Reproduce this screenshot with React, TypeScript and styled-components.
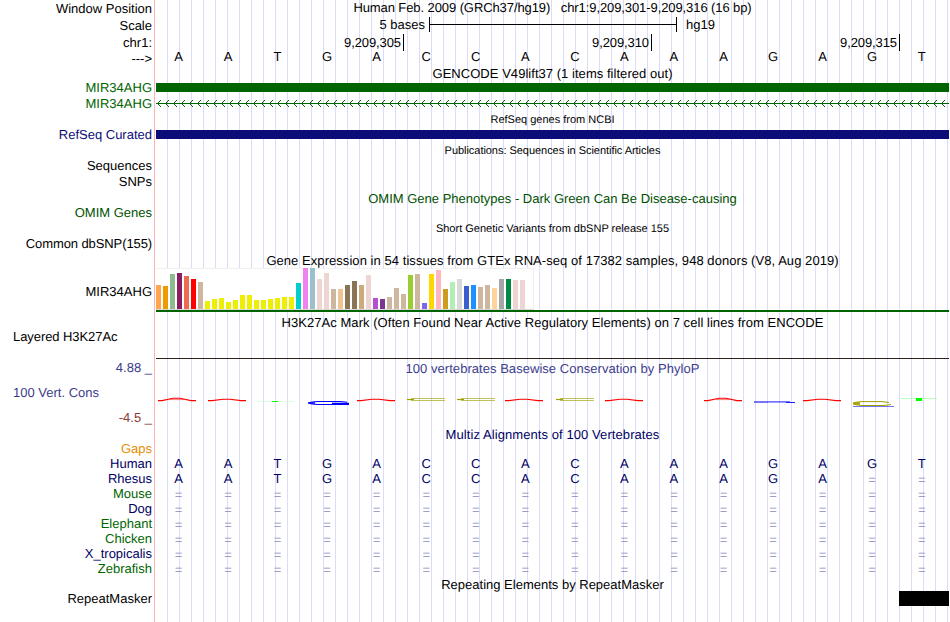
import React from 'react';
import styled, { createGlobalStyle } from 'styled-components';

const GlobalStyle = createGlobalStyle`
    body {
        margin: 0;
        background: #fff;
        overflow: hidden;
    }
`;

const Browser = styled.div`
    width: 949px;
    height: 622px;
    font-family: "Liberation Sans", Arial, sans-serif;
    font-size: 13px;
    text-rendering: geometricPrecision;
    color: #000;
    background:
      linear-gradient(#ffb4b4, #ffb4b4) 154px 0 / 1px 100% no-repeat,
      repeating-linear-gradient(90deg, #dcdcfa 0 1px, transparent 1px 12px) 167px 0 / 782px 100% no-repeat;
`;

const Row = styled.div<{ $h: number }>`
    display: grid;
    grid-template-columns: 152px 793px;
    column-gap: 4px;
    height: ${(p) => p.$h}px;
`;

const Label = styled.div<{ $color?: string; $left?: boolean; $h?: number; $top?: number; $ls?: number }>`
    box-sizing: border-box;
    text-align: ${(p) => (p.$left ? 'left' : 'right')};
    padding-left: ${(p) => (p.$left ? 13 : 0)}px;
    padding-top: ${(p) => p.$top || 0}px;
    line-height: ${(p) => p.$h || 15}px;
    letter-spacing: ${(p) => p.$ls || 0}px;
    color: ${(p) => p.$color || '#000'};
    white-space: nowrap;
`;

const Title = styled.div<{ $color?: string; $small?: boolean; $top?: number; $ls?: number }>`
    grid-column: 2;
    text-align: center;
    padding-top: ${(p) => p.$top || 0}px;
    font-size: ${(p) => (p.$small ? 11 : 13)}px;
    line-height: 15px;
    letter-spacing: ${(p) => p.$ls || 0}px;
    color: ${(p) => p.$color || '#000'};
    white-space: pre;
`;

const Bar = styled.div<{ $color: string }>`
    height: 9px;
    margin-top: 3px;
    background: ${(p) => p.$color};
`;

const ScaleBar = styled.div`
    display: flex;
    line-height: 15px;
    padding-top: 1px;
`;

const ScaleText = styled.div`
    width: 269px;
    margin-right: 4px;
    text-align: right;
`;

const ScaleRule = styled.div`
    box-sizing: border-box;
    width: 248px;
    height: 15px;
    margin-right: 9px;
    border: solid #000;
    border-width: 0 1px;
    background: linear-gradient(#000, #000) 0 7px / 100% 1px no-repeat;
`;

const Ticks = styled.div`
    display: grid;
    grid-template-columns: 248px 248px 248px;
    height: 14px;
    line-height: 17px;
    letter-spacing: -0.1px;
`;

const Tick = styled.div`
    text-align: right;
    padding-right: 2px;
    border-right: 1px solid #000;
`;

const Bases = styled.div<{ $color?: string; $lift?: number }>`
    display: grid;
    grid-template-columns: repeat(16, 49.56px);
    width: 793px;
    margin-left: -2.3px;
    margin-top: ${(p) => -(p.$lift || 0)}px;
    line-height: 15px;
    text-align: center;
    color: ${(p) => p.$color || '#000'};
`;

const Gap = styled.span`
    color: #8c8cc0;
    padding-top: 1px;
`;

const Expression = styled.div`
    height: 42px;
    border-bottom: 2px solid #006400;
`;

const Tissues = styled.div`
    box-sizing: border-box;
    width: 378px;
    height: 42px;
    display: flex;
    align-items: flex-end;
    gap: 2px;
    background: #fff;
    border-bottom: 1px solid #d8d8d8;
    box-shadow: inset -1px 1px #f0f0f0;
`;

const Tissue = styled.div`
    width: 5px;
    flex: none;
`;

const Baseline = styled.div`
    height: 29px;
    border-bottom: 1px solid #321e1e;
`;

const Limits = styled.div`
    display: flex;
    flex-direction: column;
    justify-content: space-between;
    height: 49px;
    line-height: 15px;
`;

const RepeatBox = styled.div`
    width: 50px;
    height: 15px;
    margin-left: auto;
    background: #000;
`;

const Drawing = styled.svg`
    display: block;
`;

const tissues: [number, string][] = [
    [24, '#ffa54f'], [23, '#ee9a00'], [35, '#8fbc8f'], [36, '#8b1c62'], [33, '#ee6a50'], [30, '#ff0000'],
    [27, '#cdb79e'], [8, '#eeee00'], [10, '#eeee00'], [11, '#eeee00'], [7, '#eeee00'], [9, '#eeee00'],
    [14, '#eeee00'], [14, '#eeee00'], [9, '#eeee00'], [9, '#eeee00'], [10, '#eeee00'], [11, '#eeee00'],
    [12, '#eeee00'], [12, '#eeee00'], [26, '#00cdcd'], [41, '#ee82ee'], [41, '#9ac0cd'], [30, '#eed5d2'],
    [36, '#eed5d2'], [20, '#cdb79e'], [20, '#eec591'], [24, '#8b7355'], [28, '#8b7355'], [24, '#cdaa7d'],
    [34, '#eed5d2'], [11, '#b452cd'], [10, '#7a378b'], [12, '#cdb79e'], [21, '#cdb79e'], [15, '#cdb79e'],
    [34, '#9acd32'], [35, '#cdb79e'], [6, '#7a67ee'], [35, '#ffd700'], [39, '#ffb6c1'], [20, '#cd9b1d'],
    [27, '#b4eeb4'], [30, '#d9d9d9'], [23, '#3a5fcd'], [24, '#1e90ff'], [22, '#cdb79e'], [24, '#cdb79e'],
    [21, '#ffd39b'], [30, '#a6a6a6'], [30, '#008b45'], [29, '#eed5d2'], [29, '#eed5d2'],
];

const sequence = 'AATGACCACAAAGAGT';

const species = [
    { name: 'Human', color: '#000064', bases: sequence },
    { name: 'Rhesus', color: '#000064', bases: 'AATGACCACAAAGA==' },
    { name: 'Mouse', color: '#006400', bases: '================' },
    { name: 'Dog', color: '#000064', bases: '================' },
    { name: 'Elephant', color: '#006400', bases: '================' },
    { name: 'Chicken', color: '#006400', bases: '================' },
    { name: 'X_tropicalis', color: '#000064', bases: '================' },
    { name: 'Zebrafish', color: '#006400', bases: '================' },
];

// [left edge, peak height] of each flattened A
const peaks = [[2, 3.3], [52, 2.3], [201, 2.3], [349, 2.3], [449, 2.3], [548, 3.3], [647, 2.3]];

const Intron = () => (
    <Drawing width="793" height="16" shapeRendering="crispEdges">
        <defs>
            <pattern id="arrows" width="8" height="16" patternUnits="userSpaceOnUse">
                <path d="M1 7h1v1h-1z M2 6h1v1h-1z M3 5h1v1h-1z M4 4h1v1h-1z M2 8h1v1h-1z M3 9h1v1h-1z M4 10h1v1h-1z" fill="#006400" />
            </pattern>
        </defs>
        <rect y="7" width="793" height="1" fill="#006400" />
        <rect width="793" height="16" fill="url(#arrows)" />
    </Drawing>
);

const Conservation = () => (
    <Drawing width="793" height="50" viewBox="0 376 793 50">
        {peaks.map(([x, h]) => (
            <g key={x} fill="none" stroke="#ff0000">
                <path
                    d={`M${x} 400.6 H${x + 4} L${x + 15} ${401.5 - h} H${x + 22} L${x + 33} 400.6 H${x + 38}`}
                    strokeWidth="1.1"
                />
                {h > 3 && <path d={`M${x + 12} 399.6H${x + 26}`} strokeWidth="0.5" />}
            </g>
        ))}
        {[251, 301, 400].map((x) => (
            <g key={x} fill="none" stroke="#a0a000">
                <path d={`M${x + 4} 398.5H${x + 38}M${x + 4} 400.5H${x + 38}`} strokeWidth="0.65" />
                <path d={`M${x} 399.5H${x + 7}`} strokeWidth="1.2" />
            </g>
        ))}
        <path d="M101 401.5h37" stroke="#c8ffc8" strokeWidth="0.6" />
        <path d="M116 401.5h6" stroke="#00ff00" />
        <g fill="none" stroke="#0000ff">
            <path d="M191 402.2L184 401.5H162Q153 402 153 403T162 404.5H188" strokeWidth="1" />
            <path d="M152 403H159M176 403.5H193M186 404.2H193" strokeWidth="1.4" />
            <path d="M598 401.5H634M598 402.5H612" strokeWidth="0.55" />
            <path d="M612 402.5H630" strokeWidth="0.4" />
            <path d="M630 402.5H639" strokeWidth="0.9" />
        </g>
        <g fill="none" stroke="#a0a000">
            <path d="M733 402.5L726 401.6H706Q698 402 698 403.5T706 405.5H728L735 404.5" strokeWidth="1" />
            <path d="M697 403.5H704" strokeWidth="2.4" />
        </g>
        <path d="M697 406.5h41" stroke="#5050f0" strokeWidth="0.8" />
        <path d="M745 398.5h36" stroke="#96ff96" strokeWidth="0.7" />
        <rect x="760" y="398" width="6" height="3" fill="#00ff00" />
    </Drawing>
);

const BaseRow = ({ bases, color, lift }: { bases: string; color?: string; lift?: number }) => (
    <Bases $color={color} $lift={lift}>
        {bases.split('').map((b, i) => (b === '=' ? <Gap key={i}>=</Gap> : <span key={i}>{b}</span>))}
    </Bases>
);

const App = () => {
    return (
        <Browser>
            <GlobalStyle />
            <Row $h={16}>
                <Label $h={16} $top={1}>Window Position</Label>
                <Title $ls={-0.09}>{'Human Feb. 2009 (GRCh37/hg19)   chr1:9,209,301-9,209,316 (16 bp)'}</Title>
            </Row>
            <Row $h={18}>
                <Label $h={18} $top={1}>Scale</Label>
                <ScaleBar>
                    <ScaleText>5 bases</ScaleText>
                    <ScaleRule />
                    <div>hg19</div>
                </ScaleBar>
            </Row>
            <Row $h={17}>
                <Label $h={17}>chr1:</Label>
                <Ticks>
                    <Tick>9,209,305</Tick>
                    <Tick>9,209,310</Tick>
                    <Tick>9,209,315</Tick>
                </Ticks>
            </Row>
            <Row $h={14}>
                <Label>---&gt;</Label>
                <BaseRow bases={sequence} lift={2} />
            </Row>
            <Row $h={15}>
                <Title $top={1} $ls={0.04}>GENCODE V49lift37 (1 items filtered out)</Title>
            </Row>
            <Row $h={16}>
                <Label $color="#006400">MIR34AHG</Label>
                <Bar $color="#006400" />
            </Row>
            <Row $h={16}>
                <Label $color="#006400">MIR34AHG</Label>
                <Intron />
            </Row>
            <Row $h={15}>
                <Title $small $top={1}>RefSeq genes from NCBI</Title>
            </Row>
            <Row $h={15}>
                <Label $color="#0c0c78">RefSeq Curated</Label>
                <Bar $color="#0c0c78" />
            </Row>
            <Row $h={16}>
                <Title $small $top={2} $ls={-0.04}>Publications: Sequences in Scientific Articles</Title>
            </Row>
            <Row $h={16}>
                <Label>Sequences</Label>
            </Row>
            <Row $h={15}>
                <Label>SNPs</Label>
            </Row>
            <Row $h={16}>
                <Title $color="#005000" $top={2}>OMIM Gene Phenotypes - Dark Green Can Be Disease-causing</Title>
            </Row>
            <Row $h={15}>
                <Label $color="#005000">OMIM Genes</Label>
            </Row>
            <Row $h={16}>
                <Title $small $top={2}>Short Genetic Variants from dbSNP release 155</Title>
            </Row>
            <Row $h={16}>
                <Label $ls={-0.1}>Common dbSNP(155)</Label>
            </Row>
            <Row $h={16}>
                <Title $top={1} $ls={0.055}>Gene Expression in 54 tissues from GTEx RNA-seq of 17382 samples, 948 donors (V8, Aug 2019)</Title>
            </Row>
            <Row $h={44}>
                <Label $top={16}>MIR34AHG</Label>
                <Expression>
                    <Tissues>
                        {tissues.map(([h, color], i) => (
                            <Tissue key={i} style={{ height: h, background: color }} />
                        ))}
                    </Tissues>
                </Expression>
            </Row>
            <Row $h={17}>
                <Title $top={3} $ls={0.05}>H3K27Ac Mark (Often Found Near Active Regulatory Elements) on 7 cell lines from ENCODE</Title>
            </Row>
            <Row $h={31}>
                <Label $left $ls={-0.07}>Layered H3K27Ac</Label>
                <Baseline />
            </Row>
            <Row $h={16}>
                <Label $color="#3c3c8c">4.88 _</Label>
                <Title $color="#3c3c8c" $top={1} $ls={0.04}>100 vertebrates Basewise Conservation by PhyloP</Title>
            </Row>
            <Row $h={50}>
                <Limits>
                    <Label $left $top={9} $color="#3c3c8c">100 Vert. Cons</Label>
                    <Label $color="#8c3c3c">-4.5 _</Label>
                </Limits>
                <Conservation />
            </Row>
            <Row $h={15}>
                <Title $color="#000064" $top={1} $ls={0.08}>Multiz Alignments of 100 Vertebrates</Title>
            </Row>
            <Row $h={15}>
                <Label $color="#e68c00">Gaps</Label>
            </Row>
            {species.map((s) => (
                <Row key={s.name} $h={15}>
                    <Label $color={s.color}>{s.name}</Label>
                    <BaseRow bases={s.bases} color="#000064" />
                </Row>
            ))}
            <Row $h={15}>
                <Title $top={1}>Repeating Elements by RepeatMasker</Title>
            </Row>
            <Row $h={15}>
                <Label>RepeatMasker</Label>
                <RepeatBox />
            </Row>
        </Browser>
    )
}

export default App
